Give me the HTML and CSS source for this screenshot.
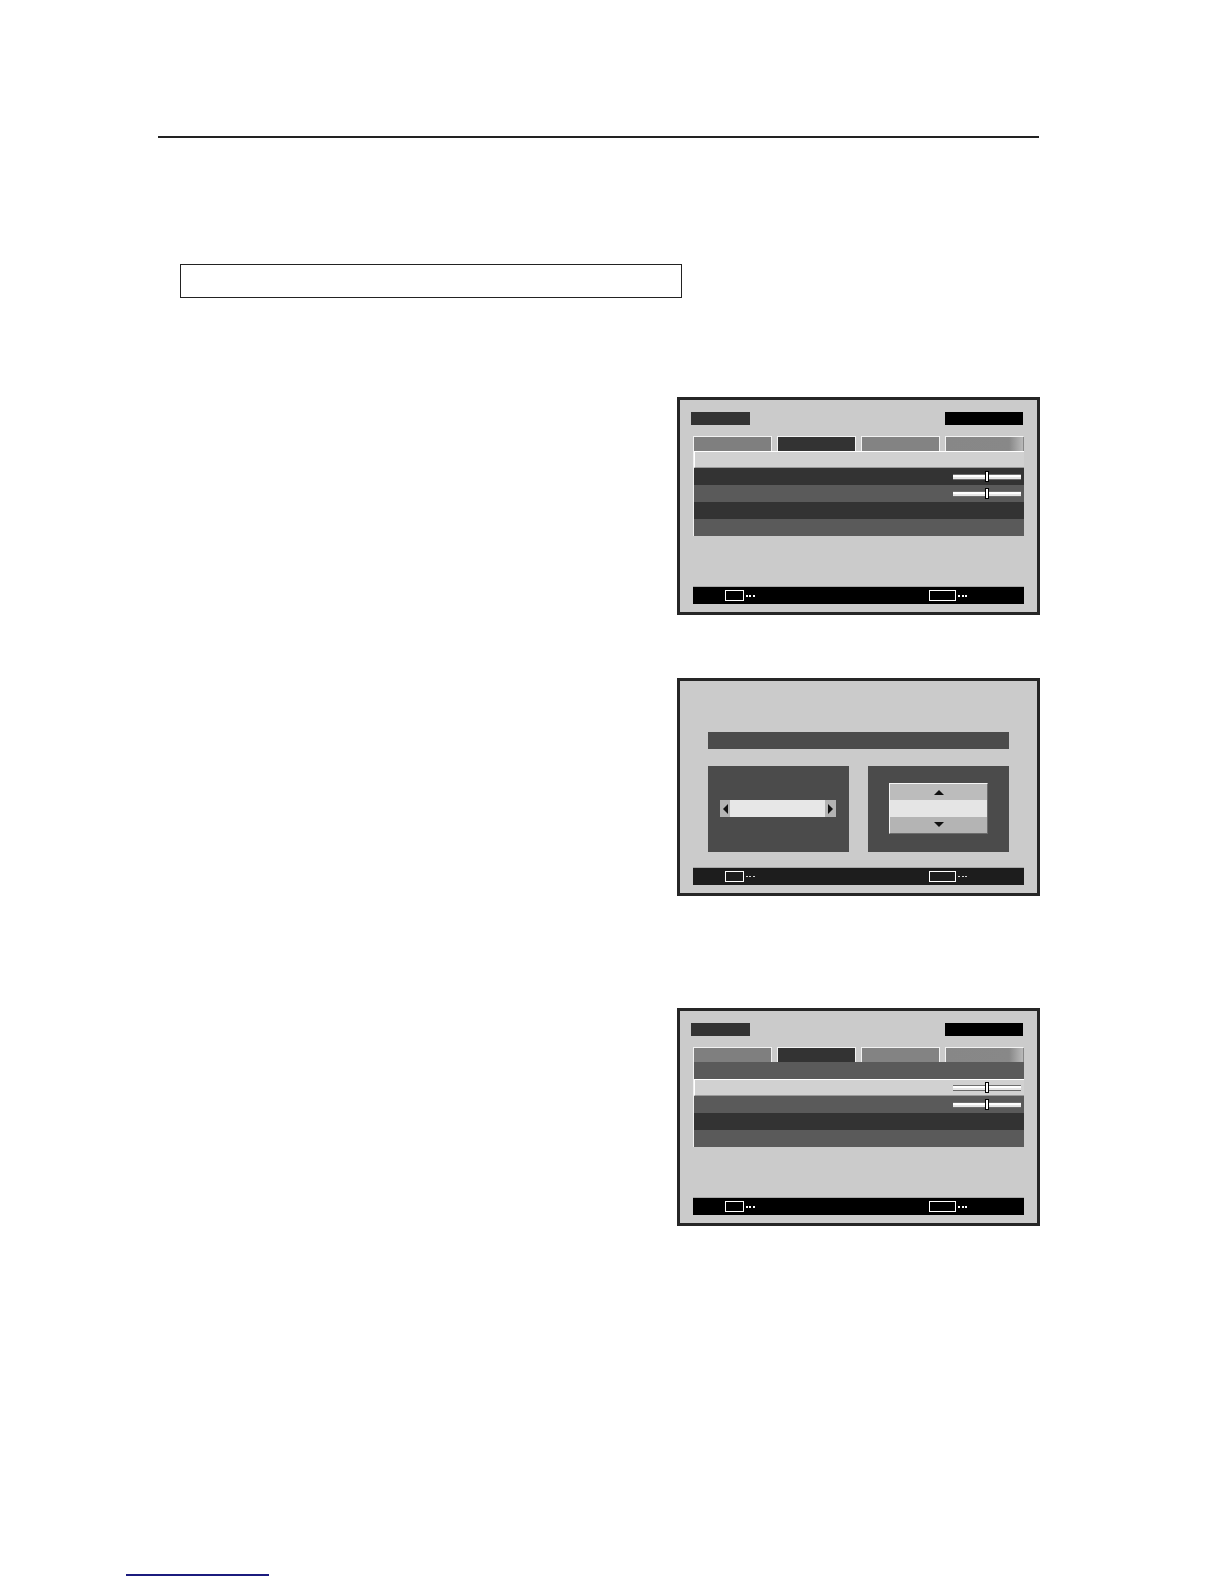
FILE: index.html
```html
<!DOCTYPE html>
<html lang="en">
<head>
<meta charset="utf-8">
<title>Menu screens</title>
<link rel="stylesheet" href="styles.css">
</head>
<body>
<div class="page">
  <div class="rule"></div>
  <div class="notice"></div>

  <div class="screens">
    <div class="screen menu s1">
      <div class="osd-head"><span class="lbl-left"></span><span class="lbl-right"></span></div>
      <div class="tabs">
        <span class="tab t1"></span><span class="tab active"></span><span class="tab t3"></span><span class="tab t4"></span>
      </div>
      <div class="list">
        <div class="row sel"></div>
        <div class="row dark"><span class="slider"><span class="thumb"></span></span></div>
        <div class="row mid"><span class="slider"><span class="thumb"></span></span></div>
        <div class="row dark"></div>
        <div class="row mid"></div>
      </div>
      <div class="footer">
        <span class="key"><span class="keybox"></span><span class="dots"></span></span>
        <span class="key"><span class="keybox wide"></span><span class="dots"></span></span>
      </div>
    </div>

    <div class="screen dialog s2">
      <div class="dlg-title"></div>
      <div class="panels">
        <div class="panel pleft">
          <div class="selector">
            <span class="arr"><span class="tri-left"></span></span>
            <span class="field"></span>
            <span class="arr"><span class="tri-right"></span></span>
          </div>
        </div>
        <div class="panel pright">
          <div class="spinner">
            <span class="spin up"><span class="tri-up"></span></span>
            <span class="spin value"></span>
            <span class="spin down"><span class="tri-down"></span></span>
          </div>
        </div>
      </div>
      <div class="footer soft">
        <span class="key"><span class="keybox"></span><span class="dots"></span></span>
        <span class="key"><span class="keybox wide"></span><span class="dots"></span></span>
      </div>
    </div>

    <div class="screen menu s3">
      <div class="osd-head"><span class="lbl-left"></span><span class="lbl-right"></span></div>
      <div class="tabs">
        <span class="tab t1"></span><span class="tab active"></span><span class="tab t3"></span><span class="tab t4"></span>
      </div>
      <div class="list">
        <div class="row mid"></div>
        <div class="row sel"><span class="slider"><span class="thumb"></span></span></div>
        <div class="row mid"><span class="slider"><span class="thumb"></span></span></div>
        <div class="row dark"></div>
        <div class="row mid"></div>
      </div>
      <div class="footer">
        <span class="key"><span class="keybox"></span><span class="dots"></span></span>
        <span class="key"><span class="keybox wide"></span><span class="dots"></span></span>
      </div>
    </div>
  </div>

  <div class="link-line"></div>
</div>
</body>
</html>
```

FILE: styles.css
```css
html, body {
  margin: 0;
  padding: 0;
  background: #ffffff;
  font-family: "Liberation Sans", Arial, sans-serif;
}

.page {
  width: 1224px;
  height: 1584px;
  box-sizing: border-box;
  padding-top: 136px;
  display: flex;
  flex-direction: column;
  overflow: hidden;
}

.rule {
  margin-left: 158px;
  width: 881px;
  height: 2px;
  background: #222222;
}

.notice {
  margin-top: 126px;
  margin-left: 180px;
  width: 502px;
  height: 34px;
  box-sizing: border-box;
  border: 1px solid #222222;
}

.screens {
  margin-top: 99px;
  margin-left: 677px;
  display: flex;
  flex-direction: column;
}

.screen {
  width: 363px;
  height: 218px;
  box-sizing: border-box;
  border: 3px solid #262626;
  background: #cbcbcb;
  display: flex;
  flex-direction: column;
}

.s2 { margin-top: 63px; }
.s3 { margin-top: 112px; }

.menu {
  padding: 12px 13px 8px;
}

.osd-head {
  height: 13px;
  display: flex;
  justify-content: space-between;
}

.lbl-left {
  margin-left: -2px;
  width: 59px;
  background: #333333;
}

.lbl-right {
  margin-right: 1px;
  width: 78px;
  background: #000000;
}

.tabs {
  margin-top: 11px;
  height: 15px;
  display: flex;
  gap: 5px;
}

.tab {
  flex: 1;
  box-sizing: border-box;
  border: 1px solid #f2f2f2;
  border-bottom: none;
  background: #7f7f7f;
}

.tab.active { background: #333333; }
.tab.t3 { background: #838383; }
.tab.t4 {
  background: linear-gradient(90deg, #878787 0%, #888888 82%, #b9b9b9 100%);
  border-right-color: transparent;
}

.list {
  box-sizing: border-box;
  border-left: 1px solid #f0f0f0;
}

.row {
  height: 17px;
  box-sizing: border-box;
  display: flex;
  justify-content: flex-end;
  align-items: center;
  padding-right: 3px;
}

.row.dark { background: #333333; }
.row.mid { background: #5a5a5a; }
.row.sel {
  background: #d1d1d1;
  border-top: 1px solid #ffffff;
  border-left: 1px solid #ffffff;
  border-bottom: 1px solid #9a9a9a;
}

.slider {
  position: relative;
  width: 68px;
  height: 6px;
  box-sizing: border-box;
  background: linear-gradient(#6e6e6e 0 1px, #ffffff 1px 3px, #e6e6e6 3px 5px, #6a6a6a 5px);
}

.thumb {
  position: absolute;
  left: 32px;
  top: -3px;
  width: 4px;
  height: 11px;
  box-sizing: border-box;
  background: #ffffff;
  border: 1px solid #000000;
}

.footer {
  margin-top: auto;
  height: 17px;
  background: #000000;
  box-shadow: 0 -1px 0 #a8a8a8;
  display: flex;
  align-items: center;
  justify-content: space-between;
  padding: 0 57px 0 32px;
}

.footer.soft { background: #1d1d1d; }

.key {
  display: flex;
  align-items: center;
  gap: 2px;
}

.keybox {
  width: 19px;
  height: 11px;
  box-sizing: border-box;
  border: 1px solid #ffffff;
}

.keybox.wide { width: 27px; }

.dots {
  width: 9px;
  height: 2px;
  background: repeating-linear-gradient(90deg, #ffffff 0 2px, transparent 2px 3.5px);
}

.soft .dots {
  height: 1px;
  background: repeating-linear-gradient(90deg, #d8d8d8 0 2px, transparent 2px 3.5px);
}

/* dialog screen */
.dialog {
  padding: 51px 13px 8px;
}

.dlg-title {
  margin: 0 15px;
  height: 17px;
  background: #4b4b4b;
}

.panels {
  margin: 17px 15px 0;
  height: 86px;
  display: grid;
  grid-template-columns: 1fr 1fr;
  column-gap: 19px;
}

.panel {
  min-width: 0;
  background: #4b4b4b;
  box-sizing: border-box;
}

.pleft { padding: 34px 0 0 12px; }
.pright { padding: 17px 0 0 21px; }

.selector {
  width: 116px;
  height: 17px;
  display: flex;
}

.arr {
  width: 10px;
  background: #b3b3b3;
  display: flex;
  align-items: center;
  justify-content: center;
}

.arr:last-child { width: 11px; }

.field {
  width: 95px;
  background: #e7e7e7;
}

.tri-left {
  width: 0;
  height: 0;
  border-top: 5px solid transparent;
  border-bottom: 5px solid transparent;
  border-right: 5px solid #111111;
}

.tri-right {
  width: 0;
  height: 0;
  border-top: 5px solid transparent;
  border-bottom: 5px solid transparent;
  border-left: 5px solid #111111;
}

.spinner {
  width: 99px;
  height: 51px;
  box-sizing: border-box;
  border-top: 1px solid #f6f6f6;
  border-left: 1px solid #f6f6f6;
  border-right: 1px solid #6c6c6c;
  border-bottom: 1px solid #6c6c6c;
  display: flex;
  flex-direction: column;
}

.spin {
  flex: 1;
  display: flex;
  align-items: center;
  justify-content: center;
}

.spin.up { background: #bcbcbc; }
.spin.value { background: #e5e5e5; }
.spin.down { background: #b4b4b4; }

.tri-up {
  width: 0;
  height: 0;
  border-left: 5px solid transparent;
  border-right: 5px solid transparent;
  border-bottom: 5px solid #111111;
}

.tri-down {
  width: 0;
  height: 0;
  border-left: 5px solid transparent;
  border-right: 5px solid transparent;
  border-top: 5px solid #111111;
}

.link-line {
  margin-top: 348px;
  margin-left: 126px;
  width: 143px;
  height: 2px;
  background: #1b1b7e;
}
```
